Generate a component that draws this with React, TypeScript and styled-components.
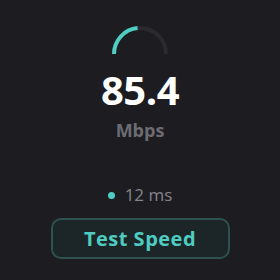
import React from "react";
import styled, { createGlobalStyle } from "styled-components";

const Global = createGlobalStyle`
  html, body { margin: 0; padding: 0; background: #1c1c21; }
  * { box-sizing: border-box; }
`;

const Panel = styled.div`
  width: 280px;
  height: 280px;
  background: #1c1c21;
  display: flex;
  flex-direction: column;
  align-items: center;
  padding-top: 24px;
  font-family: "Open Sans", "Liberation Sans", sans-serif;
`;

const Gauge = styled.svg`
  display: block;
  width: 60px;
  height: 32px;
`;

const Value = styled.div`
  margin-top: 14px;
  font-size: 40px;
  line-height: 40px;
  font-weight: 700;
  color: #ffffff;
  letter-spacing: -0.5px;
`;

const Unit = styled.div`
  margin-top: 8px;
  font-size: 18px;
  line-height: 24px;
  font-weight: 700;
  color: #6c6c72;
`;

const Latency = styled.div`
  margin-top: 42px;
  display: flex;
  align-items: center;
  gap: 10px;
  font-size: 17px;
  line-height: 22px;
  color: #85858b;
`;

const Dot = styled.span`
  width: 7px;
  height: 7px;
  border-radius: 50%;
  background: #4ecdc0;
`;

const Button = styled.button`
  margin-top: 12px;
  width: 179px;
  height: 41px;
  border: 2px solid #2d524f;
  border-radius: 10px;
  background: #1c2628;
  color: #4ecdc0;
  font-family: "Open Sans", "Liberation Sans", sans-serif;
  font-size: 20px;
  letter-spacing: 0.5px;
  font-weight: 700;
  display: flex;
  align-items: center;
  justify-content: center;
  padding: 0;
`;

const fraction = 0.47;
const r = 26;
const cx = 30;
const cy = 30;
const angle = Math.PI * (1 - fraction);
const ex = cx + r * Math.cos(angle);
const ey = cy - r * Math.sin(angle);

export default function App() {
  return (
    <>
      <Global />
      <Panel>
        <Gauge viewBox="0 0 60 32">
          <path
            d={`M ${cx - r} ${cy} A ${r} ${r} 0 0 1 ${cx + r} ${cy}`}
            fill="none"
            stroke="#2a2a30"
            strokeWidth={4}
          />
          <path
            d={`M ${cx - r} ${cy} A ${r} ${r} 0 0 1 ${ex} ${ey}`}
            fill="none"
            stroke="#4ecdc0"
            strokeWidth={4}
          />
        </Gauge>
        <Value>85.4</Value>
        <Unit>Mbps</Unit>
        <Latency>
          <Dot />
          12 ms
        </Latency>
        <Button>Test Speed</Button>
      </Panel>
    </>
  );
}
